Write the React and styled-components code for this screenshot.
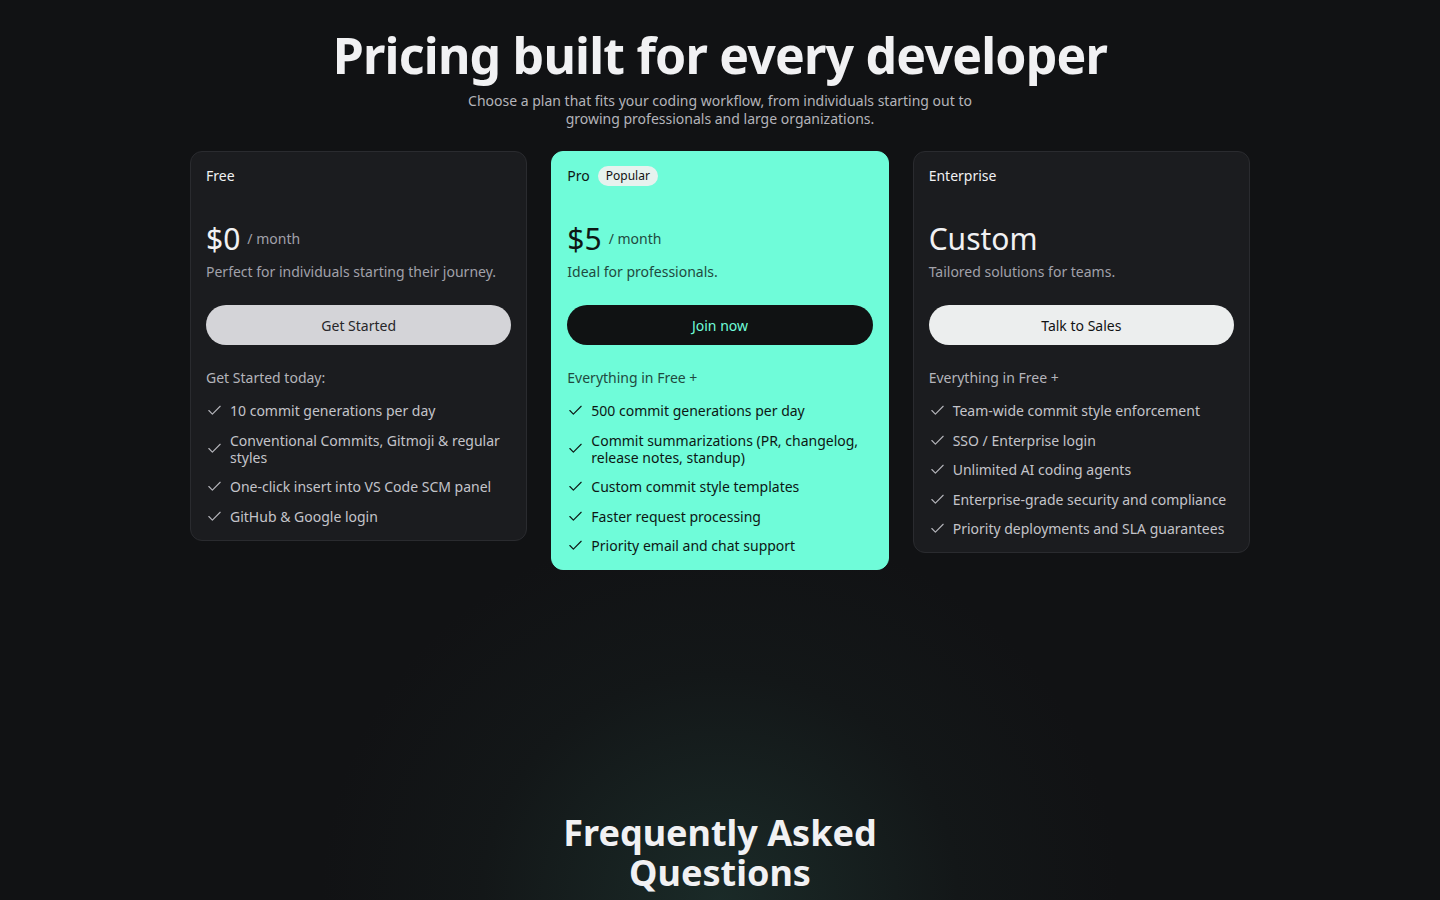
import React from "react";
import styled, { createGlobalStyle } from "styled-components";
import { Check } from "lucide-react";

const GlobalStyle = createGlobalStyle`
  * { box-sizing: border-box; }
  html, body { margin: 0; padding: 0; background: #111214; }
  body {
    font-family: "Noto Sans", "Open Sans", sans-serif;
    color: #f4f4f5;
  }
`;

const plans = [
  {
    name: "Free",
    price: "$0",
    per: "/ month",
    desc: "Perfect for individuals starting their journey.",
    cta: "Get Started",
    lead: "Get Started today:",
    features: [
      "10 commit generations per day",
      "Conventional Commits, Gitmoji & regular styles",
      "One-click insert into VS Code SCM panel",
      "GitHub & Google login",
    ],
    variant: "free",
  },
  {
    name: "Pro",
    badge: "Popular",
    price: "$5",
    per: "/ month",
    desc: "Ideal for professionals.",
    cta: "Join now",
    lead: "Everything in Free +",
    features: [
      "500 commit generations per day",
      "Commit summarizations (PR, changelog, release notes, standup)",
      "Custom commit style templates",
      "Faster request processing",
      "Priority email and chat support",
    ],
    variant: "pro",
  },
  {
    name: "Enterprise",
    price: "Custom",
    desc: "Tailored solutions for teams.",
    cta: "Talk to Sales",
    lead: "Everything in Free +",
    features: [
      "Team-wide commit style enforcement",
      "SSO / Enterprise login",
      "Unlimited AI coding agents",
      "Enterprise-grade security and compliance",
      "Priority deployments and SLA guarantees",
    ],
    variant: "enterprise",
  },
];

function App() {
  return (
    <Page>
      <GlobalStyle />
      <Header>
        <h1>Pricing built for every developer</h1>
        <p>
          Choose a plan that fits your coding workflow, from individuals starting out to
          <br />
          growing professionals and large organizations.
        </p>
      </Header>

      <Grid>
        {plans.map((plan) => {
          const pro = plan.variant === "pro";
          return (
            <Card key={plan.name} $pro={pro}>
              <TitleRow>
                <span>{plan.name}</span>
                {plan.badge && <Badge>{plan.badge}</Badge>}
              </TitleRow>

              <PriceRow>
                <Price>{plan.price}</Price>
                {plan.per && <Per $pro={pro}>{plan.per}</Per>}
              </PriceRow>
              <Desc $pro={pro}>{plan.desc}</Desc>

              <Cta $variant={plan.variant}>{plan.cta}</Cta>

              <Lead $pro={pro}>{plan.lead}</Lead>
              <Features>
                {plan.features.map((f) => (
                  <Feature key={f} $pro={pro}>
                    <Check size={17} strokeWidth={1.6} />
                    <span>{f}</span>
                  </Feature>
                ))}
              </Features>
            </Card>
          );
        })}
      </Grid>

      <Faq>Frequently Asked Questions</Faq>
    </Page>
  );
}

export default App;

const Page = styled.main`
  min-height: 100vh;
  padding-top: 25px;
  display: flex;
  flex-direction: column;
  align-items: center;
  background: radial-gradient(
      ellipse 400px 380px at 50% 100%,
      rgba(38, 72, 64, 0.45),
      rgba(30, 50, 46, 0.15) 60%,
      transparent 100%
    ),
    #111214;
  overflow: hidden;
`;

const Header = styled.header`
  text-align: center;
  h1 {
    margin: 0;
    font-size: 50px;
    line-height: 60px;
    font-weight: 700;
    letter-spacing: -0.8px;
    color: #f1f1f3;
  }
  p {
    margin: 7px 0 0;
    font-size: 14px;
    line-height: 18px;
    color: #b4b4ba;
  }
`;

const Grid = styled.section`
  width: 1060px;
  margin-top: 23px;
  display: grid;
  grid-template-columns: repeat(3, 1fr);
  gap: 24px;
  align-items: start;
`;

const Card = styled.article`
  border-radius: 12px;
  border: 1px solid ${(p) => (p.$pro ? "#6ffcd9" : "#2a2b2f")};
  background: ${(p) => (p.$pro ? "#6ffcd9" : "#1b1c1f")};
  color: ${(p) => (p.$pro ? "#0d1714" : "#f1f1f3")};
  padding: 14px 15px 15px;
`;

const TitleRow = styled.div`
  display: flex;
  align-items: center;
  gap: 8px;
  height: 20px;
  font-size: 14px;
  line-height: 20px;
`;

const Badge = styled.span`
  background: #e6f2ee;
  color: #111;
  font-size: 12px;
  line-height: 18px;
  padding: 1px 8px;
  border-radius: 999px;
`;

const PriceRow = styled.div`
  display: flex;
  align-items: center;
  gap: 7px;
  margin-top: 35px;
`;

const Price = styled.span`
  font-size: 30px;
  line-height: 36px;
  font-weight: 400;
`;

const Per = styled.span`
  font-size: 14px;
  line-height: 20px;
  color: ${(p) => (p.$pro ? "#1f4a40" : "#a1a1aa")};
`;

const Desc = styled.p`
  margin: 5px 0 0;
  font-size: 14px;
  line-height: 20px;
  color: ${(p) => (p.$pro ? "#1f4a40" : "#a1a1aa")};
`;

const ctaColors = {
  free: { bg: "#d4d4d8", fg: "#27272a" },
  pro: { bg: "#101213", fg: "#6ffcd9" },
  enterprise: { bg: "#eceeee", fg: "#111214" },
};

const Cta = styled.button`
  display: block;
  width: 100%;
  height: 40px;
  margin-top: 23px;
  border: none;
  border-radius: 999px;
  font-family: inherit;
  font-size: 14px;
  cursor: pointer;
  background: ${(p) => ctaColors[p.$variant].bg};
  color: ${(p) => ctaColors[p.$variant].fg};
`;

const Lead = styled.p`
  margin: 23px 0 0;
  font-size: 14px;
  line-height: 20px;
  color: ${(p) => (p.$pro ? "#1f4a40" : "#b4b4ba")};
`;

const Features = styled.ul`
  list-style: none;
  margin: 14px 0 0;
  padding: 0;
  display: flex;
  flex-direction: column;
  gap: 12.5px;
`;

const Feature = styled.li`
  display: flex;
  align-items: center;
  gap: 7px;
  font-size: 14px;
  line-height: 17px;
  color: ${(p) => (p.$pro ? "#0d1714" : "#c4c4ca")};
  svg {
    flex-shrink: 0;
    color: ${(p) => (p.$pro ? "#0d1714" : "#b4b4ba")};
  }
`;

const Faq = styled.h2`
  margin: 243px 0 0;
  width: 360px;
  text-align: center;
  font-size: 36px;
  line-height: 40px;
  font-weight: 700;
  color: #f1f1f3;
`;
